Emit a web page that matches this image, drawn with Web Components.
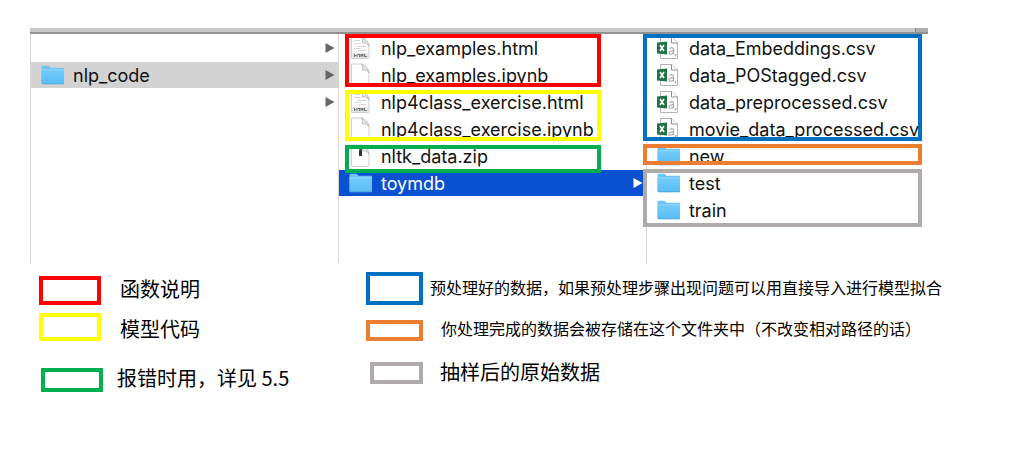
<!DOCTYPE html>
<html lang="zh-CN">
<head>
<meta charset="utf-8">
<meta name="viewport" content="width=device-width, initial-scale=1">
<title>nlp_code</title>
<style>
body { margin: 0; background: #fff; color: #000; font-family: "Noto Sans CJK SC", sans-serif; }
main { padding: 28px 0 60px 30px; }
.red { --mark: #ff0000; }
.yellow { --mark: #ffff00; }
.green { --mark: #00b050; }
.blue { --mark: #0070c0; }
.orange { --mark: #ed7d31; }
.gray { --mark: #afabab; }
</style>
</head>
<body>
<main>
  <file-browser>
    <file-column>
      <file-row arrow></file-row>
      <file-row kind="folder" state="open" arrow>nlp_code</file-row>
      <file-row arrow></file-row>
    </file-column>
    <file-column>
      <file-group class="red" style="--top:-1px;--bottom:1px">
        <file-row kind="html">nlp_examples.html</file-row>
        <file-row kind="page">nlp_examples.ipynb</file-row>
      </file-group>
      <file-group class="yellow" style="--top:1px;--bottom:1px">
        <file-row kind="html">nlp4class_exercise.html</file-row>
        <file-row kind="page">nlp4class_exercise.ipynb</file-row>
      </file-group>
      <file-group class="green" style="--top:2px;--bottom:-4px">
        <file-row kind="zip">nltk_data.zip</file-row>
      </file-group>
      <file-row kind="folder" state="selected" arrow>toymdb</file-row>
    </file-column>
    <file-column wide>
      <file-group class="blue" style="--top:-1px;--bottom:1px">
        <file-row kind="csv">data_Embeddings.csv</file-row>
        <file-row kind="csv">data_POStagged.csv</file-row>
        <file-row kind="csv">data_preprocessed.csv</file-row>
        <file-row kind="csv">movie_data_processed.csv</file-row>
      </file-group>
      <file-group class="orange" style="--top:1px;--bottom:4px">
        <file-row kind="folder">new</file-row>
      </file-group>
      <file-group class="gray" style="--top:-1px;--bottom:-4px">
        <file-row kind="folder">test</file-row>
        <file-row kind="folder">train</file-row>
      </file-group>
    </file-column>
  </file-browser>
  <color-legend>
    <legend-item slot="left" class="red" style="--w:62px;--h:29px;--gap:19px">函数说明</legend-item>
    <legend-item slot="left" class="yellow" style="--w:62px;--h:28px;--gap:19px;--before:8px;--align:end">模型代码</legend-item>
    <legend-item slot="left" class="green" style="--w:62px;--h:24px;--gap:14px;--before:27px;--indent:2px">报错时用，详见 5.5</legend-item>
    <legend-item slot="right" class="blue" style="--w:57px;--h:33px;--gap:7px;--size:16px">预处理好的数据，如果预处理步骤出现问题可以用直接导入进行模型拟合</legend-item>
    <legend-item slot="right" class="orange" style="--w:57px;--h:21px;--gap:18px;--size:16px;--before:15px;--align:start">你处理完成的数据会被存储在这个文件夹中（不改变相对路径的话）</legend-item>
    <legend-item slot="right" class="gray" style="--w:53px;--h:22px;--gap:17px;--before:21px;--indent:4px;--align:end">抽样后的原始数据</legend-item>
  </color-legend>
</main>
<script>
class Base extends HTMLElement {
  constructor() {
    super();
    this.attachShadow({ mode: "open" }).innerHTML = this.render();
  }
}

customElements.define("file-browser", class extends Base {
  render() {
    return `<style>
      :host { display: block; margin-right: 85px; }
      .bar { display: flex; justify-content: flex-end; height: 4px; background: #c9c7c8; border-bottom: 2px solid #929092; }
      .corner { width: 12px; background: #aeacad; border-left: 1px solid #858385; }
      .columns { display: flex; min-height: 229px; }
    </style>
    <div class="bar"><div class="corner"></div></div>
    <div class="columns"><slot></slot></div>`;
  }
});

customElements.define("file-column", class extends Base {
  render() {
    return `<style>
      :host { display: block; flex: 308 1 0; min-width: 0; box-sizing: border-box; padding-top: 1px; border-left: 1px solid #d6d6d6; --left: 6px; --right: 45px; }
      :host([wide]) { flex-grow: 282; --left: -4px; --right: 6px; }
    </style><slot></slot>`;
  }
});

customElements.define("file-group", class extends Base {
  render() {
    return `<style>
      :host { display: block; position: relative; }
      .frame { position: absolute; top: var(--top); bottom: var(--bottom); left: var(--left); right: var(--right); border: 4px solid var(--mark); z-index: 1; }
    </style><slot></slot><div class="frame"></div>`;
  }
});

const folder = `<svg width="24" height="20" viewBox="0 0 24 20"><defs><linearGradient id="g" x2="0" y2="1"><stop stop-color="#74cbfa"/><stop offset="1" stop-color="#58bdf6"/></linearGradient></defs><path d="M.5 2Q.5.8 1.7.8H7q1 0 1.6.9l.8 1H22q1 0 1 1V18q0 1-1 1H1.500q-1 0-1-1z" fill="#6cc5f4"/><path d="M.5 5H23v13q0 1-1 1H1.500q-1 0-1-1z" fill="url(#g)"/><path d="M.5 4.800H23" stroke="#94d8fb"/><path d="M1 18.800H22.500" stroke="#53a8d8"/></svg>`;
const sheet = `<path d="M2.500 1.500Q2.500 1 3 1H13Q19.500 3 20 10V22Q20 22.500 19.500 22.500H3Q2.500 22.500 2.500 22z" fill="#fdfdfd" stroke="#cfcfcf"/><path d="M12.500 1Q14.500 3 13.500 7Q18 6 20 10Q19.500 7 12.500 1z" fill="#f1f1f1" stroke="#bcbcbc"/>`;
const wrap = s => `<svg width="24" height="24" viewBox="0 0 24 24">${s}</svg>`;
const icons = {
  folder,
  page: wrap(sheet),
  html: wrap(sheet + `<path d="M5 4.500H11M5 12.500H12" stroke="#cfdde2"/><path d="M5 7.500H12M8 10.500H17M10 14.500H17" stroke="#edd0d0"/><path d="M3 17H19.500V22H3z" fill="#e6e6e6"/><path d="M5.500 18v3M5.500 19.500h2M8 18v3M9 18.500h2M10.500 18v3M12 21v-3l1 2 1-2v3M15.500 18v2.500H18" stroke="#777" fill="none"/>`),
  zip: wrap(sheet + `<path d="M11.500 1V12" stroke="#777" stroke-width="3" stroke-dasharray="1 1"/><path d="M11.500 2V6" stroke="#444" stroke-width="2"/><rect x="10" y="6" width="3" height="6" rx="1" fill="#333"/>`),
  csv: wrap(`<path d="M3.500 1.500H15L20.500 7V22.500H3.500z" fill="#fff" stroke="#b5b5b5"/><path d="M14.500 1.500V7H20.500" fill="#fff" stroke="#8e8e8e"/><path d="M0 6.500L10 5.500V18.500L0 17.500z" fill="#217346"/><path d="M3 9L7 15M7 9L3 15" stroke="#fff" stroke-width="1.600"/><path d="M12.500 12.500Q16.500 10.500 16.500 13.500V18.500M16.500 15Q12 14.500 12 17T16.500 17" fill="none" stroke="#aaa" stroke-width="1.200"/><path d="M19 18L18 20.500" stroke="#aaa" stroke-width="1.200"/>`)
};

customElements.define("file-row", class extends Base {
  render() {
    const arrow = this.hasAttribute("arrow")
      ? `<svg class="arrow" width="10" height="12" viewBox="0 0 10 12"><path d="M.5 1L9.500 6L.5 11z" fill="currentColor"/></svg>` : "";
    return `<style>
      :host { display: flex; align-items: center; box-sizing: border-box; height: 26px; margin-bottom: 1px; padding: 0 3px 0 10px; color: #111; font: 18px/24px Inter, sans-serif; white-space: nowrap; }
      :host([state=open]) { background: #d3d3d3; }
      :host([state=selected]) { background: #0a50d3; color: #fff; }
      .icon { display: flex; align-items: center; width: 24px; margin-right: 8px; }
      .name { flex: 1; padding-top: 2px; }
      .arrow { color: #666; }
      :host([state=selected]) .arrow { color: #fff; }
    </style><span class="icon">${icons[this.getAttribute("kind")] || ""}</span><span class="name"><slot></slot></span>${arrow}`;
  }
});

customElements.define("color-legend", class extends Base {
  render() {
    return `<style>
      :host { display: flex; padding-top: 9px; }
      .left { flex: 327 1 0; padding: 4px 0 0 9px; }
      .right { flex: 647 1 0; }
    </style>
    <div class="left"><slot name="left"></slot></div>
    <div class="right"><slot name="right"></slot></div>`;
  }
});

customElements.define("legend-item", class extends Base {
  render() {
    return `<style>
      :host { display: flex; align-items: var(--align, center); gap: var(--gap); margin: var(--before, 0) 0 0 var(--indent, 0); font-size: var(--size, 20px); line-height: 16px; white-space: nowrap; }
      .swatch { box-sizing: border-box; flex: none; width: var(--w); height: var(--h); border: 4px solid var(--mark); }
      .label { padding-bottom: 4px; }
    </style><span class="swatch"></span><span class="label"><slot></slot></span>`;
  }
});
</script>
</body>
</html>
